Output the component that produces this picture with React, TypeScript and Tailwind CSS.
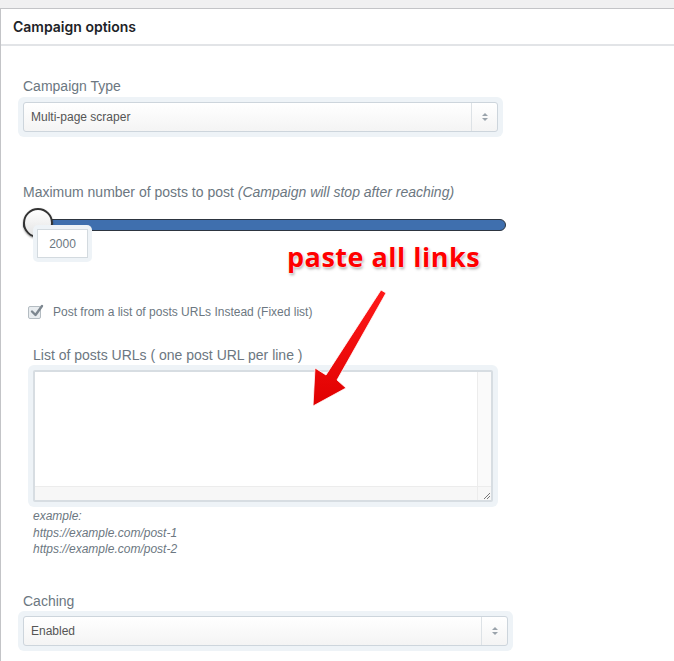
import React from "react";

function SelectBox({ value, width }: { value: string; width: string }) {
  return (
    <div className={`${width} rounded-[6px] bg-[#eef3f7] p-[5px]`}>
      <div className="flex h-[30px] rounded-[3px] border border-[#cdd5dc] bg-gradient-to-b from-white to-[#f4f4f4]">
        <div className="flex flex-1 items-center px-[7px] text-[12px] text-[#555]">{value}</div>
        <div className="flex w-[26px] flex-col items-center justify-center gap-[2px] border-l border-[#dde2e6]">
          <span className="h-0 w-0 border-x-[3px] border-b-[3px] border-x-transparent border-b-[#9aa3ab]" />
          <span className="h-0 w-0 border-x-[3px] border-t-[3px] border-x-transparent border-t-[#9aa3ab]" />
        </div>
      </div>
    </div>
  );
}

export default function App() {
  return (
    <div className="relative min-h-screen bg-white font-['Liberation_Sans',Arial,sans-serif]">
      <div className="h-[9px] border-b border-[#c3c4c7] bg-[#f0f0f1]" />
      <div className="min-h-[652px] border-l border-[#c3c4c7]">
        <div className="flex h-[37px] items-center border-b-2 border-[#e2e4e7] px-[12px] font-['Inter',sans-serif] text-[14px] font-semibold text-[#1d2327]">
          Campaign options
        </div>

        <div className="pl-[17px] pr-4">
          {/* Campaign type */}
          <div className="mt-[32px] pl-[5px] text-[14px] leading-[16px] text-[#6c7781]">Campaign Type</div>
          <div className="mt-[3px]">
            <SelectBox value="Multi-page scraper" width="w-[485px]" />
          </div>

          {/* Max posts slider */}
          <div className="mt-[47px] pl-[5px] text-[14px] leading-[16px] text-[#6c7781]">
            Maximum number of posts to post <i>(Campaign will stop after reaching)</i>
          </div>
          <div className="relative mt-[19px] ml-[5px] h-[12px] w-[483px] rounded-full border border-[#2d3540] bg-[#3f6fae]">
            <div className="absolute left-[-1px] top-[-12px] h-[30px] w-[30px] rounded-full border-2 border-[#333] bg-gradient-to-b from-white to-[#e3e3e3] shadow-[0_1px_2px_rgba(0,0,0,0.4)]" />
            <div className="absolute left-[9px] top-[5px] rounded-[5px] bg-[#eef3f7] p-[4px]">
              <div className="flex h-[29px] w-[51px] items-center justify-center border border-[#d3dadf] bg-white text-[12px] text-[#6c7781]">
                2000
              </div>
            </div>
          </div>

          {/* Fixed list section */}
          <div className="mt-[72px] pl-[10px]">
            <label className="flex items-center gap-[12px] text-[12px] text-[#6c7781]">
              <span className="relative h-[13px] w-[13px] rounded-[2px] border border-[#b4bcc2] bg-[#e9edf0]">
                <svg viewBox="0 0 14 14" className="absolute left-[1px] top-[-3px] h-[14px] w-[14px]">
                  <path d="M2 7.5 L5.5 11 L12 2" fill="none" stroke="#7d8790" strokeWidth="2.4" strokeLinecap="round" strokeLinejoin="round" />
                </svg>
              </span>
              Post from a list of posts URLs Instead (Fixed list)
            </label>

            <div className="mt-[26px] pl-[5px] text-[14px] leading-[16px] text-[#6c7781]">
              List of posts URLs ( one post URL per line )
            </div>
            <div className="mt-[2px] w-[470px] rounded-[6px] bg-[#eef3f7] p-[5px]">
              <div className="flex h-[132px] flex-col rounded-[2px] border-2 border-[#d7dde2] bg-white">
                <div className="flex flex-1">
                  <div className="flex-1" />
                  <div className="w-[14px] border-l border-[#ececec] bg-[#fafafa]" />
                </div>
                <div className="flex h-[14px] border-t border-[#ececec] bg-[#f7f7f7]">
                  <div className="flex-1" />
                  <div className="flex w-[14px] items-end justify-end border-l border-[#ececec]">
                    <svg viewBox="0 0 10 10" className="h-[10px] w-[10px]">
                      <path d="M9 3 L3 9 M9 6 L6 9" stroke="#777" strokeWidth="1" />
                    </svg>
                  </div>
                </div>
              </div>
            </div>
            <div className="mt-[1px] pl-[5px] text-[12px] italic leading-[16.5px] text-[#6c7781]">
              <div>example:</div>
              <div>https://example.com/post-1</div>
              <div>https://example.com/post-2</div>
            </div>
          </div>

          {/* Caching */}
          <div className="mt-[35px] pl-[5px] text-[14px] leading-[16px] text-[#6c7781]">Caching</div>
          <div className="mt-[2px]">
            <SelectBox value="Enabled" width="w-[495px]" />
          </div>
        </div>
      </div>

      {/* annotation */}
      <div className="absolute left-[287px] top-[243px] font-['Open_Sans',sans-serif] text-[27px] font-bold leading-none tracking-[0.5px] text-[#ff0000] [text-shadow:0_0_2px_#fff,0_0_2px_#fff,1px_2px_3px_rgba(0,0,0,0.35)]">
        paste all links
      </div>
      <svg className="pointer-events-none absolute left-0 top-0 h-[661px] w-[674px]" viewBox="0 0 674 661">
        <defs>
          <linearGradient id="arw" x1="0" y1="0" x2="0" y2="1">
            <stop offset="0" stopColor="#ff1a1a" />
            <stop offset="1" stopColor="#e00000" />
          </linearGradient>
        </defs>
        <polygon
          points="381,290 386,293 337,380 346,388 313,406 315,368 326,375"
          fill="url(#arw)"
          stroke="#ffffff"
          strokeWidth="0.8"
          strokeLinejoin="round"
        />
      </svg>
    </div>
  );
}
